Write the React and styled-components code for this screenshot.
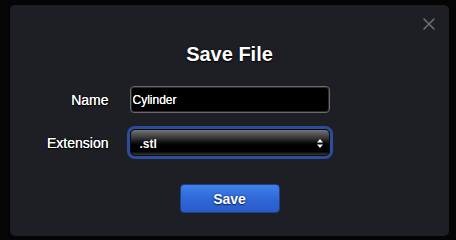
import React from "react";
import styled, { createGlobalStyle } from "styled-components";

const Global = createGlobalStyle`
  html, body { margin: 0; padding: 0; background: #050506; }
  body { font-family: "Liberation Sans", Arial, Helvetica, sans-serif; }
  * { box-sizing: border-box; }
`;

const Page = styled.div`
  width: 456px;
  height: 240px;
  padding: 5px 7px 4px 10px;
  background: #050506;
`;

const Modal = styled.div`
  position: relative;
  width: 439px;
  height: 231px;
  background: #1e1f24;
  border-radius: 5px;
  padding-top: 37px;
  display: flex;
  flex-direction: column;
  align-items: center;
`;

const Close = styled.button`
  position: absolute;
  top: 8px;
  right: 9px;
  width: 22px;
  height: 22px;
  padding: 0;
  border: none;
  background: transparent;
  display: flex;
  align-items: center;
  justify-content: center;
  cursor: pointer;
`;

const Title = styled.h1`
  margin: 0;
  font-size: 20px;
  line-height: 24px;
  font-weight: 700;
  color: #ffffff;
  text-shadow: 0 0 2px #000, 0 1px 1px #000;
`;

const Form = styled.div`
  margin-top: 20px;
  width: 100%;
  display: grid;
  grid-template-columns: 1fr 200px 1fr;
  column-gap: 21px;
  row-gap: 16px;
  align-items: center;
`;

const Label = styled.label`
  grid-column: 1;
  justify-self: end;
  font-size: 14px;
  line-height: 16px;
  color: #ffffff;
  text-shadow: 0 0 0.5px #fff, 0 0 2px #000, 0 1px 1px #000;
  margin-top: ${(p) => p.$dy || 0}px;
`;

const TextInput = styled.input`
  grid-column: 2;
  width: 200px;
  height: 27px;
  margin: 0;
  padding: 1px 2px 0;
  background: #000;
  border: 1px solid #6b6b6d;
  box-shadow: inset 0 0 0 1px #2a2a2c;
  border-radius: 4px;
  color: #fff;
  font-family: "Liberation Sans", Arial, sans-serif;
  font-size: 12px;
  text-shadow: 0 0 0.6px #fff;
  outline: none;
`;

const SelectWrap = styled.div`
  grid-column: 2;
  position: relative;
  width: 200px;
  height: 27px;
  border-radius: 5px;
  box-shadow: 0 0 0 3px #2b4d9c;
`;

const Select = styled.select`
  appearance: none;
  -webkit-appearance: none;
  width: 100%;
  height: 100%;
  margin: 0;
  padding: 2px 0 0 9px;
  border: 1px solid #0c0c0c;
  border-radius: 5px;
  background: linear-gradient(
    to bottom,
    #747476 0%,
    #444446 25%,
    #141414 48%,
    #000 60%,
    #000 86%,
    #3a3a3c 100%
  );
  color: #fff;
  font-family: "Liberation Sans", Arial, sans-serif;
  font-size: 12px;
  font-weight: 700;
  text-shadow: 0 0 2px #000;
  outline: none;
`;

const Arrows = styled.svg`
  position: absolute;
  right: 7px;
  top: 10px;
  pointer-events: none;
`;

const SaveButton = styled.button`
  margin-top: 28px;
  width: 100px;
  height: 29px;
  border: 1px solid #1d3f8c;
  border-radius: 4px;
  background: linear-gradient(to bottom, #3e81ea 0%, #2f66d6 55%, #2a5cc6 100%);
  color: #fff;
  font-family: "Liberation Sans", Arial, sans-serif;
  font-size: 14px;
  font-weight: 700;
  text-shadow: 0 0 2px #0a2a6a, 0 1px 1px #0a2a6a;
  cursor: pointer;
`;

export default function App() {
  return (
    <>
      <Global />
      <Page>
        <Modal>
          <Close aria-label="Close">
            <svg width="12" height="12" viewBox="0 0 12 12">
              <path d="M1 1 L11 11 M11 1 L1 11" stroke="#707074" strokeWidth="1.5" strokeLinecap="round" />
            </svg>
          </Close>
          <Title>Save File</Title>
          <Form>
            <Label htmlFor="fname">Name</Label>
            <TextInput id="fname" defaultValue="Cylinder" />
            <Label htmlFor="fext" $dy={1}>Extension</Label>
            <SelectWrap>
              <Select id="fext" defaultValue=".stl">
                <option value=".stl">.stl</option>
                <option value=".obj">.obj</option>
              </Select>
              <Arrows width="6" height="9" viewBox="0 0 6 9">
                <path d="M3 0 L6 3.5 L0 3.5 Z M3 9 L6 5.5 L0 5.5 Z" fill="#fff" />
              </Arrows>
            </SelectWrap>
          </Form>
          <SaveButton>Save</SaveButton>
        </Modal>
      </Page>
    </>
  );
}
